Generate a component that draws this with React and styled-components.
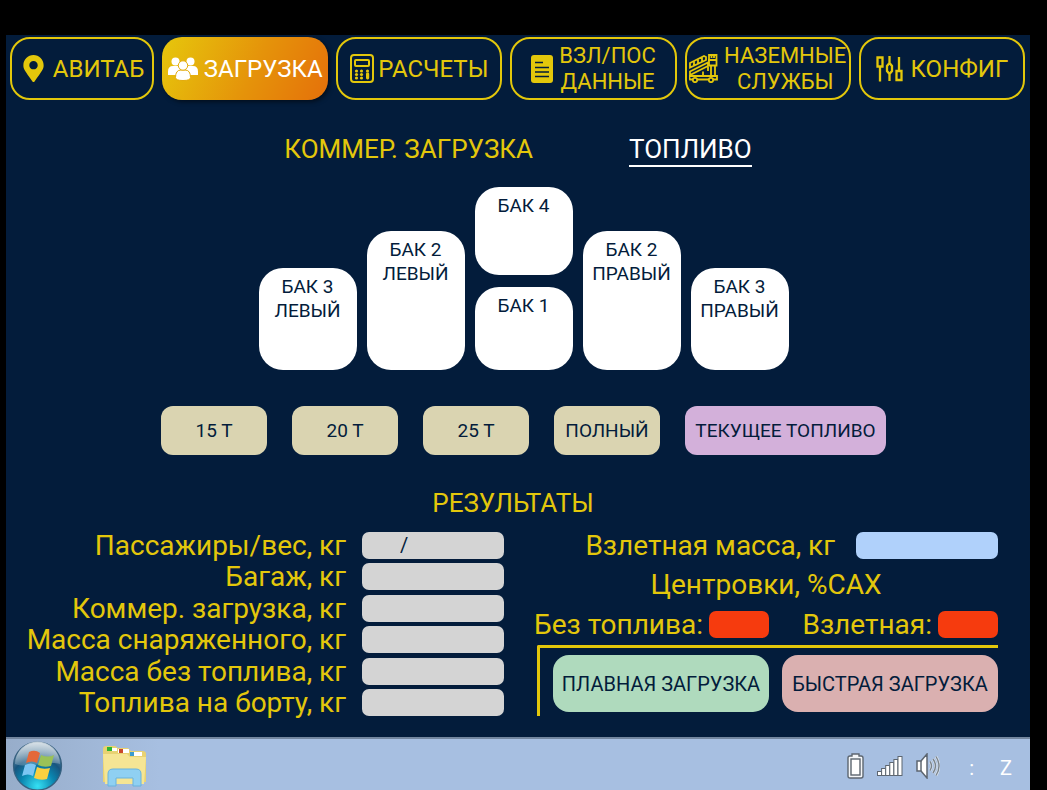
import React from "react";
import styled, { createGlobalStyle, css } from "styled-components";
import { FaMapMarkerAlt } from "react-icons/fa";

const yellow = "#e3c70b";
const navy = "#031c3b";

const GlobalStyle = createGlobalStyle`
  *, *::before, *::after { box-sizing: border-box; }
  html, body { margin: 0; background: #000; }
  body { font-family: Roboto, "Liberation Sans", sans-serif; color: ${yellow}; }
  button, input { font: inherit; color: inherit; border: 0; padding: 0; margin: 0; }
  button { cursor: pointer; }
`;

const Bezel = styled.div`
  min-height: 100vh;
  padding: 35px 17px 0 6px;
  display: flex;
`;

const Screen = styled.div`
  flex: 1;
  min-width: 0;
  display: flex;
  flex-direction: column;
  background: ${navy};
`;

const Nav = styled.nav`
  display: grid;
  grid-template-columns: minmax(0, 144fr) repeat(5, minmax(0, 166fr));
  gap: 8px;
  padding: 2px 5px 0 4px;
`;

const NavButton = styled.button`
  height: 63px;
  display: flex;
  align-items: center;
  justify-content: center;
  gap: ${(p) => p.$gap || 6}px;
  border: 2px solid ${yellow};
  border-radius: 20px;
  background: transparent;
  font-size: ${(p) => (p.$twoLine ? 22 : 24)}px;
  line-height: ${(p) => (p.$twoLine ? 26 : 28)}px;
  white-space: nowrap;
  ${(p) =>
    p.$active &&
    css`
      border: 0;
      color: #fff;
      background: linear-gradient(115deg, #e6c70c, #e5930a 55%, #e5700a);
      box-shadow: 2px 2px 4px rgba(0, 0, 0, 0.5);
    `}
  svg { flex: none; }
`;

const Main = styled.main`
  flex: 1;
  display: flex;
  flex-direction: column;
  align-items: center;
`;

const Tabs = styled.div`
  display: flex;
  gap: 96px;
  margin-top: 33px;
`;

const Tab = styled.a`
  font-size: 26px;
  line-height: 32px;
  color: ${(p) => (p.$current ? "#fff" : yellow)};
  border-bottom: 2px solid ${(p) => (p.$current ? "#fff" : "transparent")};
  text-decoration: none;
`;

const Tanks = styled.section`
  display: flex;
  align-items: flex-end;
  gap: 10px;
  margin-top: 20px;
  padding-left: 11px;
`;

const TankStack = styled.div`
  display: flex;
  flex-direction: column;
  gap: 12px;
`;

const Tank = styled.div`
  width: 98px;
  height: ${(p) => p.$height}px;
  padding-top: 7px;
  border-radius: 24px;
  background: #fff;
  color: ${navy};
  font-size: 19px;
  line-height: 24px;
  text-align: center;
  white-space: pre-line;
`;

const QuickRow = styled.div`
  display: flex;
  gap: 25px;
  margin-top: 36px;
  padding-left: 11px;
`;

const QuickButton = styled.button`
  width: ${(p) => (p.$wide ? 201 : 106)}px;
  height: 49px;
  border-radius: 12px;
  background: ${(p) => (p.$wide ? "#d3b0da" : "#dad4b1")};
  color: ${navy};
  font-size: 19px;
  white-space: nowrap;
`;

const Heading = styled.h2`
  margin: 32px 10px 0 0;
  font-size: 26px;
  font-weight: 400;
  line-height: 32px;
`;

const Results = styled.section`
  align-self: stretch;
  display: grid;
  grid-template-columns: 498fr 464fr;
  gap: 30px;
  padding: 13px 32px 20px 0;
  font-size: 28px;
  line-height: 27px;
`;

const FieldList = styled.div`
  display: flex;
  flex-direction: column;
  justify-content: space-between;
`;

const Field = styled.label`
  display: flex;
  align-items: center;
  justify-content: flex-end;
  gap: ${(p) => p.$gap}px;
  white-space: nowrap;
`;

const Value = styled.input`
  flex: none;
  width: ${(p) => p.$width || 142}px;
  height: 27px;
  border-radius: 7px;
  padding-left: 38px;
  background: ${(p) => p.$tone || "#d4d4d4"};
  color: ${navy};
  font-size: 20px;
`;

const Summary = styled.div`
  display: flex;
  flex-direction: column;
`;

const Subheading = styled.h3`
  margin: 12px 0 13px;
  font: inherit;
  text-align: center;
`;

const BalanceRow = styled.div`
  display: flex;
  justify-content: space-between;
`;

const LoadPanel = styled.div`
  display: grid;
  grid-template-columns: 1fr 1fr;
  gap: 13px;
  margin: 7px 0 0 3px;
  padding: 7px 0 4px 13px;
  border: solid ${yellow};
  border-width: 3px 0 0 3px;
  border-radius: 2px 0 0 0;
`;

const LoadButton = styled.button`
  height: 57px;
  border-radius: 16px;
  background: ${(p) => p.$tone};
  color: ${navy};
  font-size: 20px;
  line-height: 24px;
  white-space: nowrap;
`;

const Taskbar = styled.footer`
  height: 53px;
  display: flex;
  align-items: center;
  justify-content: space-between;
  padding: 2px 18px 0 6px;
  border-top: 2px solid #73869f;
  background: linear-gradient(90deg, #97adca, #a7bfe1 15%, #a7bfe1);
`;

const TaskGroup = styled.div`
  display: flex;
  align-items: center;
  gap: ${(p) => p.$gap}px;
`;

const TaskButton = styled.button`
  display: flex;
  background: none;
`;

const Clock = styled.time`
  display: flex;
  gap: 26px;
  padding: 4px 0 0 16px;
  color: #fff;
  font-size: 20px;
`;

const PeopleIcon = () => (
  <svg width="30" height="24" viewBox="0 0 30 24" fill="currentColor">
    <circle cx="7.500" cy="4.500" r="4" />
    <circle cx="22.500" cy="4.500" r="4" />
    <path d="M0 18v-3.500Q0 9 5 9h5q3 0 4 4l-4 5zM30 18v-3.500Q30 9 25 9h-5q-3 0-4 4l4 5z" />
    <g stroke="#e3ab0a" strokeWidth="1">
      <path d="M7.500 20.500Q7.500 13 13 13h4q5.500 0 5.500 7.500 0 3-7.500 3t-7.500-3z" />
      <circle cx="15" cy="8.500" r="4.700" />
    </g>
  </svg>
);

const CalculatorIcon = () => (
  <svg width="24" height="29" viewBox="0 0 24 29" fill="none" stroke="currentColor" strokeWidth="2">
    <rect x="1" y="1" width="22" height="27" rx="3" />
    <rect x="5" y="6" width="14" height="6" rx="1" />
    <g fill="currentColor" stroke="none">
      {[17, 20.5, 24].map((y) => [6.5, 11.5].map((x) => <circle key={`${x}-${y}`} cx={x} cy={y} r="1.6" />))}
      <circle cx="17.500" cy="17" r="1.600" />
      <rect x="16" y="18.500" width="3.200" height="7" rx="1.400" />
    </g>
  </svg>
);

const DocumentIcon = () => (
  <svg width="22" height="28" viewBox="0 0 22 28">
    <rect width="22" height="28" rx="3" fill="currentColor" />
    <path d="M4 7.500h8M4 12.500h14M4 17h14M4 21.500h14" stroke={navy} strokeWidth="1.7" />
  </svg>
);

const StairsIcon = () => (
  <svg width="29" height="29" viewBox="0 0 29 29" fill="none" stroke="currentColor" strokeWidth="1.8">
    <path d="M1 9 15 2l2 1v3L1 13.500zM5 7.500v4M9 5.500v4M13 3.500v4" />
    <path d="M20 1h7.500v10.500H20zM19 6h9M22.500 1v3M25 1v3" />
    <path d="M1 17.500 19 8.500v3.500L1 21zM1 17.500V21" />
    <path d="M22 12v10M26 12v10M14 17.500v4M19 13v4" />
    <path d="M0 22h28v3.500H1z" />
    <circle cx="6" cy="26" r="2.2" fill={navy} />
    <circle cx="22" cy="26" r="2.2" fill={navy} />
  </svg>
);

const SlidersIcon = () => (
  <svg width="27" height="26" viewBox="0 0 27 26" fill="none" stroke="currentColor" strokeWidth="2.3">
    <path d="M1.500 1.500h5v9h-5zM4 10.500v15" />
    <path d="M13.500 0v7M13.500 18v7M13.500 7l2.500 3v5l-2.500 3-2.500-3v-5z" />
    <path d="M20.500 15h5v9h-5zM23 15V1" />
  </svg>
);

const StartOrb = () => (
  <svg width="51" height="50" viewBox="0 0 51 50">
    <defs>
      <radialGradient id="orb" cx="50%" cy="92%" r="90%">
        <stop offset="0" stopColor="#35e0f4" />
        <stop offset="0.4" stopColor="#0a84ae" />
        <stop offset="0.65" stopColor="#17557f" />
        <stop offset="1" stopColor="#7f9cb2" />
      </radialGradient>
      <linearGradient id="shine" x2="0" y2="1">
        <stop offset="0" stopColor="#fff" stopOpacity="0.7" />
        <stop offset="1" stopColor="#fff" stopOpacity="0.2" />
      </linearGradient>
    </defs>
    <circle cx="25.500" cy="25" r="24" fill="url(#orb)" stroke="#36607f" strokeWidth="1.2" />
    <path d="M3 23a22.500 22.500 0 0 1 45 0c-12-4-32 5-45 0z" fill="url(#shine)" />
    <path d="M17 11q6-3 11 1l-3 10q-5-3-11 0z" fill="#e4683a" />
    <path d="M29 14q7 3 13 0l-3 11q-7 2-13-1z" fill="#9ac257" />
    <path d="M13 24q6-3 11 0l-3 11q-5-3-11 0z" fill="#7cc6f3" />
    <path d="M25 26q6 3 13 1l-3 11q-6 2-13-1z" fill="#fad040" />
  </svg>
);

const FolderIcon = () => (
  <svg width="46" height="42" viewBox="0 0 46 42">
    <path d="M2 4q0-3 3-3h9l3 2h10l3 3h12q3 0 3 3v28H2z" fill="#e8d272" />
    <path d="M6 3h10v3H6z" fill="#fff" />
    <path d="M6 2h5v4H6z" fill="#2eb52f" />
    <path d="M17 4h11v4H17z" fill="#fff" />
    <path d="M18 4h4v4h-4z" fill="#c9472b" />
    <path d="M29 7h12v4H29z" fill="#fff" />
    <path d="M29 7h4v4h-4z" fill="#3b9bce" />
    <path d="M2 9h24l3 3h16l-2 27H4z" fill="#f5e594" />
    <path d="M7 41V29q0-5 5-5h23q5 0 5 5v12h-8v-8H15v8z" fill="#8fd0f2" stroke="#69b3dd" />
  </svg>
);

const BatteryIcon = () => (
  <svg width="17" height="26" viewBox="0 0 17 26" fill="#f4f6f8" stroke="#5d6670" strokeWidth="1.4">
    <path d="M5 3V1h7v2h2q2 0 2 2v18q0 2-2 2H3q-2 0-2-2V5q0-2 2-2z" />
    <rect x="4" y="6" width="9" height="16" fill="#fff" />
  </svg>
);

const SignalIcon = () => (
  <svg width="26" height="20" viewBox="0 0 26 20" fill="#fff" stroke="#5d6670">
    {[4, 7, 10, 13, 16, 19].map((h, i) => (
      <rect key={h} x={0.5 + i * 4.1} y={19.5 - h} width="4" height={h} />
    ))}
  </svg>
);

const SpeakerIcon = () => (
  <svg width="24" height="26" viewBox="0 0 24 26" fill="none" stroke="#5d6670" strokeWidth="1.5">
    <path d="M1 8h4l6-7v24l-6-7H1z" fill="#fff" />
    <path d="M5 8v10" />
    <path d="M14 8.500q3 4.500 0 9M17 6q5 7 0 14M20 3.500q6 9.500 0 19" stroke="#dfe6ee" strokeWidth="2.6" />
    <path d="M14 8.500q3 4.500 0 9M17 6q5 7 0 14M20 3.500q6 9.500 0 19" stroke="#79838d" strokeWidth="1.4" />
  </svg>
);

const fields = [
  ["Пассажиры/вес, кг", "/"],
  ["Багаж, кг", ""],
  ["Коммер. загрузка, кг", ""],
  ["Масса снаряженного, кг", ""],
  ["Масса без топлива, кг", ""],
  ["Топлива на борту, кг", ""],
];

export default function App() {
  return (
    <Bezel>
      <GlobalStyle />
      <Screen>
        <Nav>
          <NavButton><FaMapMarkerAlt size={27} />АВИТАБ</NavButton>
          <NavButton $active><PeopleIcon />ЗАГРУЗКА</NavButton>
          <NavButton $gap={4}><CalculatorIcon />РАСЧЕТЫ</NavButton>
          <NavButton $twoLine><DocumentIcon /><span>ВЗЛ/ПОС<br />ДАННЫЕ</span></NavButton>
          <NavButton $twoLine><StairsIcon /><span>НАЗЕМНЫЕ<br />СЛУЖБЫ</span></NavButton>
          <NavButton $gap={8}><SlidersIcon />КОНФИГ</NavButton>
        </Nav>
        <Main>
          <Tabs>
            <Tab href="#payload">КОММЕР. ЗАГРУЗКА</Tab>
            <Tab href="#fuel" $current>ТОПЛИВО</Tab>
          </Tabs>
          <Tanks>
            <Tank $height={102}>{"БАК 3\nЛЕВЫЙ"}</Tank>
            <Tank $height={139}>{"БАК 2\nЛЕВЫЙ"}</Tank>
            <TankStack>
              <Tank $height={88}>БАК 4</Tank>
              <Tank $height={83}>БАК 1</Tank>
            </TankStack>
            <Tank $height={139}>{"БАК 2\nПРАВЫЙ"}</Tank>
            <Tank $height={102}>{"БАК 3\nПРАВЫЙ"}</Tank>
          </Tanks>
          <QuickRow>
            <QuickButton>15 Т</QuickButton>
            <QuickButton>20 Т</QuickButton>
            <QuickButton>25 Т</QuickButton>
            <QuickButton>ПОЛНЫЙ</QuickButton>
            <QuickButton $wide>ТЕКУЩЕЕ ТОПЛИВО</QuickButton>
          </QuickRow>
          <Heading>РЕЗУЛЬТАТЫ</Heading>
          <Results>
            <FieldList>
              {fields.map(([label, value]) => (
                <Field key={label} $gap={16}>
                  {label}
                  <Value defaultValue={value} />
                </Field>
              ))}
            </FieldList>
            <Summary>
              <Field $gap={21}>
                Взлетная масса, кг
                <Value $tone="#b0d1fb" />
              </Field>
              <Subheading>Центровки, %САХ</Subheading>
              <BalanceRow>
                <Field $gap={6}>
                  Без топлива:
                  <Value $tone="#f63b0e" $width={60} />
                </Field>
                <Field $gap={6}>
                  Взлетная:
                  <Value $tone="#f63b0e" $width={60} />
                </Field>
              </BalanceRow>
              <LoadPanel>
                <LoadButton $tone="#afdabd">ПЛАВНАЯ ЗАГРУЗКА</LoadButton>
                <LoadButton $tone="#dab0b0">БЫСТРАЯ ЗАГРУЗКА</LoadButton>
              </LoadPanel>
            </Summary>
          </Results>
        </Main>
        <Taskbar>
          <TaskGroup $gap={38}>
            <TaskButton aria-label="Пуск"><StartOrb /></TaskButton>
            <TaskButton aria-label="Проводник"><FolderIcon /></TaskButton>
          </TaskGroup>
          <TaskGroup $gap={13}>
            <BatteryIcon />
            <SignalIcon />
            <SpeakerIcon />
            <Clock><span>:</span><span>Z</span></Clock>
          </TaskGroup>
        </Taskbar>
      </Screen>
    </Bezel>
  );
}
